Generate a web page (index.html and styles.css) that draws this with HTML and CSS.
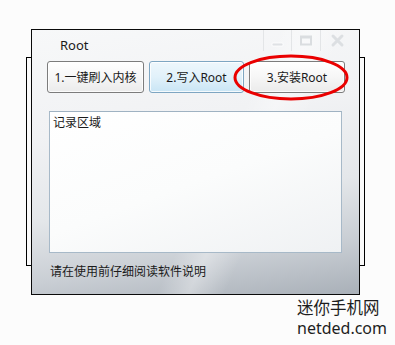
FILE: index.html
```html
<!DOCTYPE html>
<html lang="zh">
<head>
<meta charset="utf-8">
<title>Root</title>
<link rel="stylesheet" href="styles.css">
</head>
<body>
<div class="stage">
  <div class="back-frame"></div>
  <div class="window">
    <div class="titlebar">
      <span class="title">Root</span>
      <div class="controls">
        <span class="ctl">
          <svg width="27" height="21" viewBox="0 0 27 21"><rect x="8" y="13" width="11" height="3" rx="1" fill="#dfe2e5" stroke="#fff" stroke-width="0.8"/></svg>
        </span>
        <span class="ctl">
          <svg width="28" height="21" viewBox="0 0 28 21"><rect x="9" y="6.5" width="10" height="8" fill="none" stroke="#dadde0" stroke-width="2"/><rect x="9" y="6.5" width="10" height="2" fill="#dadde0"/></svg>
        </span>
        <span class="ctl last">
          <svg width="32" height="21" viewBox="0 0 32 21"><path d="M12 6 L21 15 M21 6 L12 15" stroke="#dcdfe2" stroke-width="3" stroke-linecap="round"/></svg>
        </span>
      </div>
    </div>
    <div class="btn-row">
      <button class="btn b1">1.一键刷入内核</button>
      <button class="btn b2 active">2.写入Root</button>
      <button class="btn b3">3.安装Root</button>
    </div>
    <div class="log">记录区域</div>
    <div class="status">请在使用前仔细阅读软件说明</div>
    <svg class="mark" width="120" height="50" viewBox="0 0 120 50"><ellipse cx="58" cy="23.5" rx="56" ry="21.5" fill="none" stroke="#ea0000" stroke-width="3"/></svg>
  </div>
  <div class="watermark">
    <div class="wm-cn">迷你手机网</div>
    <div class="wm-en">netded.com</div>
  </div>
</div>
</body>
</html>
```
FILE: styles.css
```css
html, body {
  margin: 0;
  padding: 0;
  background: #fcfcfc;
}
body {
  font-family: "Noto Sans", "Noto Sans CJK SC", sans-serif;
  color: #1b1b1b;
}
.stage {
  position: relative;
  width: 395px;
  height: 345px;
  overflow: hidden;
}
.back-frame {
  position: absolute;
  left: 26px;
  top: 57px;
  width: 337px;
  height: 207px;
  border: 1px solid #000;
  background: #fafafa;
}
.window {
  position: relative;
  margin: 29px 0 0 31px;
  width: 327px;
  height: 264px;
  border: 1px solid #0a0a0a;
  background:
    linear-gradient(115deg, rgba(255,255,255,0) 0%, rgba(255,255,255,0) 55%, rgba(255,255,255,0.35) 62%, rgba(255,255,255,0) 70%),
    linear-gradient(172deg, #f7f8f9 0%, #f1f2f4 35%, #e4e7ea 62%, #c9ced4 82%, #a9b0b8 100%);
  display: flex;
  flex-direction: column;
}
.titlebar {
  height: 31px;
  display: flex;
  align-items: flex-start;
  justify-content: space-between;
}
.title {
  font-size: 13px;
  line-height: 17px;
  margin: 7px 0 0 28px;
  color: #1a1a1a;
}
.controls {
  display: flex;
  margin-right: 6px;
}
.ctl {
  display: block;
  height: 21px;
  border-left: 1px solid #e3e5e7;
}
.ctl svg {
  display: block;
}
.btn-row {
  display: flex;
  gap: 5px;
  padding-left: 15px;
}
.btn {
  height: 32px;
  margin: 0;
  padding: 0;
  font-family: "Noto Sans", "Noto Sans CJK SC", sans-serif;
  font-size: 12px;
  color: #1a1a1a;
  border: 1px solid #7c7c7c;
  border-radius: 3px;
  background: linear-gradient(180deg, #ffffff 0%, #f6f6f6 50%, #ebebeb 100%);
  box-shadow: inset 0 0 0 1px rgba(255,255,255,0.8);
}
.b1 { width: 97px; }
.b2 { width: 95px; }
.b3 { width: 96px; }
.btn.active {
  border-color: #7ea6c2;
  background: linear-gradient(180deg, #eef7fc 0%, #e1f1fa 50%, #c9e5f5 100%);
}
.log {
  margin: 18px 0 0 17px;
  width: 285px;
  height: 134px;
  padding: 3px 3px;
  border: 1px solid #a7b9c8;
  border-top-color: #9fb2c2;
  background: linear-gradient(160deg, #ffffff 0%, #fbfcfc 50%, #eff1f3 100%);
  font-size: 12px;
  line-height: 16px;
  color: #1a1a1a;
}
.status {
  margin: 11px 0 0 18px;
  font-size: 12px;
  line-height: 16px;
  color: #1a1a1a;
}
.mark {
  position: absolute;
  left: 201px;
  top: 24px;
}
.watermark {
  margin: 1px 0 0 297px;
  color: #1e1e1e;
}
.wm-cn {
  font-family: "Noto Sans CJK SC", sans-serif;
  font-size: 16.5px;
  line-height: 22px;
}
.wm-en {
  font-family: "Noto Sans", sans-serif;
  font-size: 16px;
  line-height: 21px;
}
```
